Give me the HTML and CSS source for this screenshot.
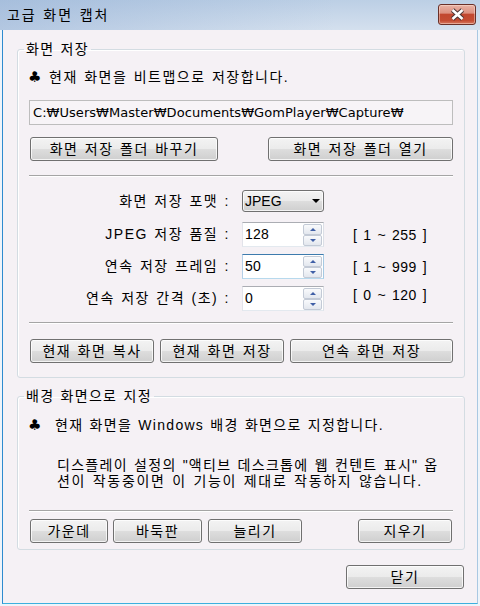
FILE: index.html
```html
<!DOCTYPE html>
<html lang="ko">
<head>
<meta charset="utf-8">
<title>고급 화면 캡처</title>
<link rel="stylesheet" href="styles.css">
</head>
<body>
<div class="window">
  <div class="titlebar">
    <span class="title">고급 화면 캡처</span>
    <button class="close" aria-label="닫기">
      <svg width="17" height="13" viewBox="0 0 17 13">
        <path d="M3.5 2 L13.5 11 M13.5 2 L3.5 11" stroke="#4a3434" stroke-width="4.6" fill="none"/>
        <path d="M3.5 2 L13.5 11 M13.5 2 L3.5 11" stroke="#ffffff" stroke-width="2.6" fill="none"/>
      </svg>
    </button>
  </div>
  <div class="client">
    <fieldset class="group g1">
      <legend>화면 저장</legend>
      <p class="note"><span class="club">♣</span><span>현재 화면을 비트맵으로 저장합니다.</span></p>
      <div class="pathbox">C:₩Users₩Master₩Documents₩GomPlayer₩Capture₩</div>
      <div class="row folder-row">
        <button class="btn b-change">화면 저장 폴더 바꾸기</button>
        <button class="btn b-open">화면 저장 폴더 열기</button>
      </div>
      <hr class="sep sep1">
      <div class="form">
        <span class="lbl">화면 저장 포맷 :</span>
        <div class="combo"><span>JPEG</span><span class="tri"></span></div>
        <span></span>

        <span class="lbl">JPEG 저장 품질 :</span>
        <div class="spin"><span class="val">128</span><span class="arrows"><span class="up"></span><span class="down"></span></span></div>
        <span class="range">[ 1 ~ 255 ]</span>

        <span class="lbl">연속 저장 프레임 :</span>
        <div class="spin focus"><span class="val">50</span><span class="arrows"><span class="up"></span><span class="down"></span></span></div>
        <span class="range">[ 1 ~ 999 ]</span>

        <span class="lbl">연속 저장 간격 (초) :</span>
        <div class="spin"><span class="val">0</span><span class="arrows"><span class="up"></span><span class="down"></span></span></div>
        <span class="range range-up">[ 0 ~ 120 ]</span>
      </div>
      <hr class="sep sep2">
      <div class="row action-row">
        <button class="btn b-copy">현재 화면 복사</button>
        <button class="btn b-save">현재 화면 저장</button>
        <button class="btn b-cont">연속 화면 저장</button>
      </div>
    </fieldset>

    <fieldset class="group g2">
      <legend>배경 화면으로 지정</legend>
      <p class="note note2"><span class="club">♣</span><span>현재 화면을 Windows 배경 화면으로 지정합니다.</span></p>
      <p class="para"><span class="line line1">디스플레이 설정의 <span class="q">"</span>액티브 데스크톱에 웹 컨텐트 표시<span class="q">"</span> 옵</span><span class="line">션이 작동중이면 이 기능이 제대로 작동하지 않습니다.</span></p>
      <hr class="sep sep3">
      <div class="row wall-row">
        <button class="btn b-center">가운데</button>
        <button class="btn b-tile">바둑판</button>
        <button class="btn b-stretch">늘리기</button>
        <button class="btn b-clear">지우기</button>
      </div>
    </fieldset>

    <div class="footer">
      <button class="btn b-close">닫기</button>
    </div>
  </div>
</div>
</body>
</html>
```

FILE: styles.css
```css
* { box-sizing: border-box; }

html, body {
  margin: 0;
  padding: 0;
}

body {
  width: 480px;
  height: 606px;
  overflow: hidden;
  background: #eef4fa;
  font-family: "Liberation Sans", "Noto Sans CJK KR", sans-serif;
  font-size: 14px;
  letter-spacing: 1.5px;
  word-spacing: 1px;
  color: #000;
}

.window {
  width: 480px;
  height: 606px;
  display: flex;
  flex-direction: column;
}

.titlebar {
  flex: none;
  height: 30px;
  display: flex;
  align-items: center;
  justify-content: space-between;
  padding: 0 4px 0 7px;
  background:
    linear-gradient(to right, rgba(140, 170, 210, 0.45), rgba(255, 255, 255, 0) 70%),
    linear-gradient(to bottom, #bccfe5, #d4e0ee);
}

.title {
  line-height: 16px;
  padding-bottom: 1px;
  letter-spacing: 1.9px;
}

.close {
  width: 38px;
  height: 21px;
  margin-top: -1px;
  padding: 0;
  border: 1px solid #6a3028;
  border-radius: 3px;
  background: linear-gradient(to bottom, #e9b3a5 0%, #dd9080 42%, #c2472f 50%, #c44c33 82%, #d77a62 100%);
  box-shadow: inset 0 0 0 1px rgba(255, 230, 220, 0.45);
  display: flex;
  align-items: center;
  justify-content: center;
}

.close svg { display: block; }

.client {
  flex: 1;
  margin: 0 2px 2px 2px;
  border-left: 1px solid #2d8bcf;
  border-right: 1px solid #a9c8e2;
  border-bottom: 1px solid #3cb0de;
  background: #f5f1f5;
  padding: 0 12px 0 14px;
  display: flex;
  flex-direction: column;
}

/* group boxes */
.group {
  margin: 0;
  padding: 0 11px;
  min-width: 0;
  border: 1px solid #d3dce2;
  border-radius: 3px;
  box-shadow: inset 1px 1px 0 #ffffff;
}

.group legend {
  margin-left: -5px;
  padding: 0 2px;
  line-height: 16px;
  letter-spacing: 1.3px;
}

.g1 { margin-top: 11px; padding-bottom: 14px; }
.g2 { margin-top: 10px; padding-bottom: 6px; }

.note {
  margin: 12px 0 0;
  line-height: 16px;
  display: flex;
  align-items: center;
  white-space: nowrap;
}

.note2 { margin-top: 13px; letter-spacing: 1.3px; }

.club {
  flex: none;
  width: 21px;
  margin-left: -1px;
  font-family: "DejaVu Sans", sans-serif;
  font-size: 15px;
  letter-spacing: 0;
}

.note2 .club { width: 27px; }

.pathbox {
  margin-top: 15px;
  height: 25px;
  border: 1px solid #bdbdbd;
  background: #f7f4f7;
  padding: 0 3px;
  line-height: 23px;
  white-space: nowrap;
  overflow: hidden;
  font-family: "DejaVu Sans", "Noto Sans CJK KR", sans-serif;
  font-size: 13px;
  word-spacing: 0;
  letter-spacing: 0.05px;
}

.row { display: flex; }

.btn {
  height: 24px;
  padding: 0;
  border: 1px solid #707070;
  border-radius: 3px;
  background: linear-gradient(to bottom, #f3f3f3 0%, #ebebeb 48%, #dddddd 52%, #cfcfcf 100%);
  box-shadow: inset 0 0 0 1px rgba(255, 255, 255, 0.75);
  font: inherit;
  letter-spacing: inherit;
  word-spacing: inherit;
  color: #000;
  line-height: 20px;
  text-align: center;
  white-space: nowrap;
}

.folder-row { margin-top: 12px; justify-content: space-between; }
.b-change { width: 188px; margin-left: 1px; }
.b-open { width: 185px; }

.sep {
  margin: 14px 0 0;
  height: 0;
  border: 0;
  border-top: 1px solid #a5a5a5;
  border-bottom: 1px solid #ffffff;
}

.sep2 { margin-top: 11px; }
.sep3 { margin-top: 21px; }

/* form grid */
.form {
  margin-top: 13px;
  display: grid;
  grid-template-columns: 201px 82px 1fr;
  grid-template-rows: 25px 25px 25px 25px;
  column-gap: 12px;
  row-gap: 7px;
  align-items: center;
}

.lbl {
  text-align: right;
  white-space: nowrap;
  line-height: 16px;
  margin-bottom: 2px;
}

.form .lbl:first-child { align-self: start; margin-top: 3px; }

.combo {
  align-self: start;
  height: 22px;
  border: 1px solid #707070;
  border-radius: 3px;
  background: linear-gradient(to bottom, #f3f3f3 0%, #ebebeb 48%, #dddddd 52%, #cfcfcf 100%);
  box-shadow: inset 0 0 0 1px rgba(255, 255, 255, 0.75);
  display: flex;
  align-items: center;
  justify-content: space-between;
  padding: 0 3px 0 2px;
  line-height: 16px;
  letter-spacing: 0;
}

.tri {
  width: 0;
  height: 0;
  border-left: 4px solid transparent;
  border-right: 4px solid transparent;
  border-top: 4px solid #000;
}

.spin {
  height: 25px;
  border: 1px solid;
  border-color: #abadb3 #dbdfe6 #e3e9ef #e2e3ea;
  background: #ffffff;
  display: flex;
}

.spin.focus { border-color: #3d7bad #a4c9e3 #b7d9ed #b5cfe7; }

.val {
  flex: 1;
  padding-left: 2px;
  line-height: 23px;
  letter-spacing: 0.2px;
}

.arrows {
  width: 20px;
  padding: 1px 1px 0 0;
  display: flex;
  flex-direction: column;
}

.arrows span {
  flex: 1;
  border: 1px solid #c3cad6;
  border-radius: 2px;
  background: linear-gradient(to bottom, #f9fafc, #e3e7ee);
  display: flex;
  align-items: center;
  justify-content: center;
}

.arrows span::after {
  content: "";
  width: 0;
  height: 0;
  border-left: 3.5px solid transparent;
  border-right: 3.5px solid transparent;
}

.arrows .up::after { border-bottom: 3px solid #3f5fa6; }
.arrows .down::after { border-top: 3px solid #3f5fa6; }

.range {
  padding-left: 17px;
  white-space: nowrap;
  line-height: 16px;
  letter-spacing: 0.5px;
  word-spacing: 1.5px;
}

.range-up { margin-bottom: 8px; }

.action-row { margin-top: 15px; }
.b-copy { width: 124px; margin-left: 1px; }
.b-save { width: 124px; margin-left: 6px; }
.b-cont { width: 163px; margin-left: 6px; }

.para {
  margin: 24px 0 0;
  padding-left: 28px;
  line-height: 16px;
  letter-spacing: 1.7px;
}

.para .line { display: block; white-space: nowrap; }

.para .line1 { letter-spacing: 1.3px; }

.q {
  font-family: "Liberation Sans", sans-serif;
  letter-spacing: 1px;
}

.wall-row { margin-top: 7px; }
.b-center { width: 78px; margin-left: 1px; }
.b-tile { width: 89px; margin-left: 5px; }
.b-stretch { width: 94px; margin-left: 6px; }
.b-clear { width: 94px; margin-left: auto; margin-right: 1px; }

.footer {
  margin-top: 15px;
  display: flex;
  justify-content: flex-end;
  padding-right: 1px;
}

.b-close { width: 118px; }
```
